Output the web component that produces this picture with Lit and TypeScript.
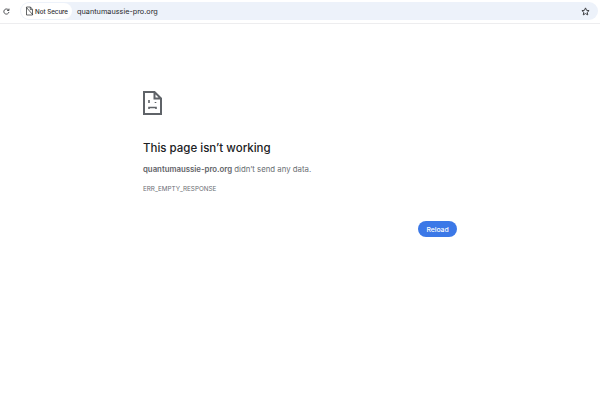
import { LitElement, html, css } from "lit";
import { customElement } from "lit/decorators.js";

@customElement("app-root")
export class AppRoot extends LitElement {
  static styles = css`
    :host { display: block; width: 600px; height: 400px; background: #fff; font-family: Inter, "Liberation Sans", sans-serif; overflow: hidden; }
    .bar { height: 24px; box-sizing: border-box; border-bottom: 1px solid #ededef; display: flex; align-items: flex-start; padding: 2px 2px 0 0; }
    .reload { width: 20px; height: 18px; box-sizing: border-box; padding-left: 3px; display: flex; align-items: center; flex: none; }
    .omni { flex: 1; height: 18px; border-radius: 9px; background: #edf2fa; display: flex; align-items: center; padding: 0 8px 0 1px; }
    .chip { height: 16px; width: 51px; box-sizing: border-box; border-radius: 8px; background: #fff; display: flex; align-items: center; gap: 1px; padding-left: 4px; font-size: 6.2px; font-weight: 500; color: #2a2b2e; white-space: nowrap; }
    .url { margin-left: 5px; font-size: 7.3px; color: #28292c; flex: 1; }
    .main { width: 314px; margin: 67px 0 0 143px; }
    .icon { display: block; }
    h1 { margin: 25px 0 0; font-size: 11.5px; line-height: 17px; font-weight: 500; color: #202124; }
    .desc { margin: 7px 0 0; font-size: 7.8px; line-height: 11px; color: #6a6e73; }
    .desc b { font-weight: 600; color: #5f6368; }
    .code { margin: 10px 0 0; font-size: 6.3px; line-height: 8px; color: #6a6e73; }
    .actions { display: flex; justify-content: flex-end; margin-top: 28px; }
    .btn { width: 39px; height: 16px; border: 0; padding: 0; border-radius: 8px; background: #3b78e7; color: #fff; font: 500 6.8px Inter, "Liberation Sans", sans-serif; }
  `;
  render() {
    return html`
      <div class="bar">
        <div class="reload">
          <svg width="7" height="7" viewBox="0 0 9 9" fill="none" stroke="#45474a" stroke-width="1.2">
            <path d="M7.6 5.2A3.3 3.3 0 1 1 6.7 2.2L7.6 3"/><path d="M7.7 .8V3.2H5.3"/>
          </svg>
        </div>
        <div class="omni">
          <div class="chip">
            <svg width="9" height="10" viewBox="0 0 9 10" fill="none" stroke="#3c4043" stroke-width=".8">
              <path d="M1.5 1.6V9H7.5V3.4L5.5 1H1.5M5.3 1V3.6H7.5M1 1 8 9"/>
            </svg>
            <span>Not Secure</span>
          </div>
          <span class="url">quantumaussie-pro.org</span>
          <svg width="9" height="9" viewBox="0 0 10 10" fill="none" stroke="#3c3e41" stroke-width="1.1">
            <path d="M5 1 6.2 3.7 9 4 6.9 5.9 7.5 8.8 5 7.3 2.5 8.8 3.1 5.9 1 4 3.8 3.7Z"/>
          </svg>
        </div>
      </div>
      <div class="main">
        <svg class="icon" width="19" height="24" viewBox="0 0 19 24" fill="none" stroke="#5f6368" stroke-width="2">
          <path d="M11.5 1H1V23H18V7.5L11.5 1V7.5H18"/>
          <path d="M6 9V12M12.5 11V12M6 18V16.5H13V18" stroke-width="1.6"/>
        </svg>
        <h1>This page isn’t working</h1>
        <p class="desc"><b>quantumaussie-pro.org</b> didn’t send any data.</p>
        <p class="code">ERR_EMPTY_RESPONSE</p>
        <div class="actions"><button class="btn">Reload</button></div>
      </div>
    `;
  }
}
